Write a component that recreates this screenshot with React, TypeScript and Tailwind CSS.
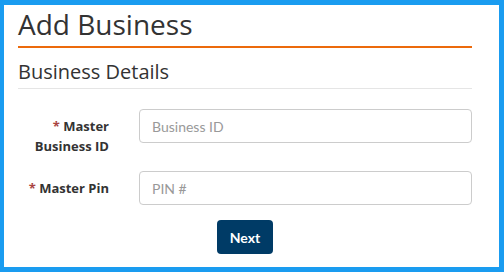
import React from 'react';

const App = () => {
    return (
        <div className="w-[504px] h-[272px] bg-white border-[5px] border-l-4 border-[#1a9cf0] font-['Open_Sans',sans-serif] text-[#333]">
            <div className="pl-[14px] pr-[27px]">
                <h1 className="text-[28px] leading-[36px] pt-px pb-[4px] border-b-2 border-[#ec6a0c]">
                    Add Business
                </h1>
                <h2 className="mt-[10px] text-[20px] leading-[28px] pb-[2px] border-b border-[#e5e5e5]">
                    Business Details
                </h2>

                <form className="mt-[20px]">
                    <div className="flex mb-[15px]">
                        <label className="w-[91px] pt-[7px] text-right text-[13px] leading-[20px] font-bold">
                            <span className="text-[#a94442]">*</span> Master Business ID
                        </label>
                        <input
                            className="ml-[30px] h-[34px] flex-1 border border-[#ccc] rounded px-[12px] text-[14px] font-['Lato',sans-serif] placeholder:text-[#999] outline-none"
                            placeholder="Business ID"
                        />
                    </div>
                    <div className="flex mb-[15px]">
                        <label className="w-[91px] pt-[7px] text-right text-[13px] leading-[20px] font-bold whitespace-nowrap">
                            <span className="text-[#a94442]">*</span> Master Pin
                        </label>
                        <input
                            className="ml-[30px] h-[34px] flex-1 border border-[#ccc] rounded px-[12px] text-[14px] font-['Lato',sans-serif] placeholder:text-[#999] outline-none"
                            placeholder="PIN #"
                        />
                    </div>
                    <div className="flex justify-center">
                        <button
                            type="button"
                            className="w-[56px] h-[34px] rounded bg-[#003b66] text-white text-[14px] font-bold font-['Lato',sans-serif]"
                        >
                            Next
                        </button>
                    </div>
                </form>
            </div>
        </div>
    );
};

export default App;
